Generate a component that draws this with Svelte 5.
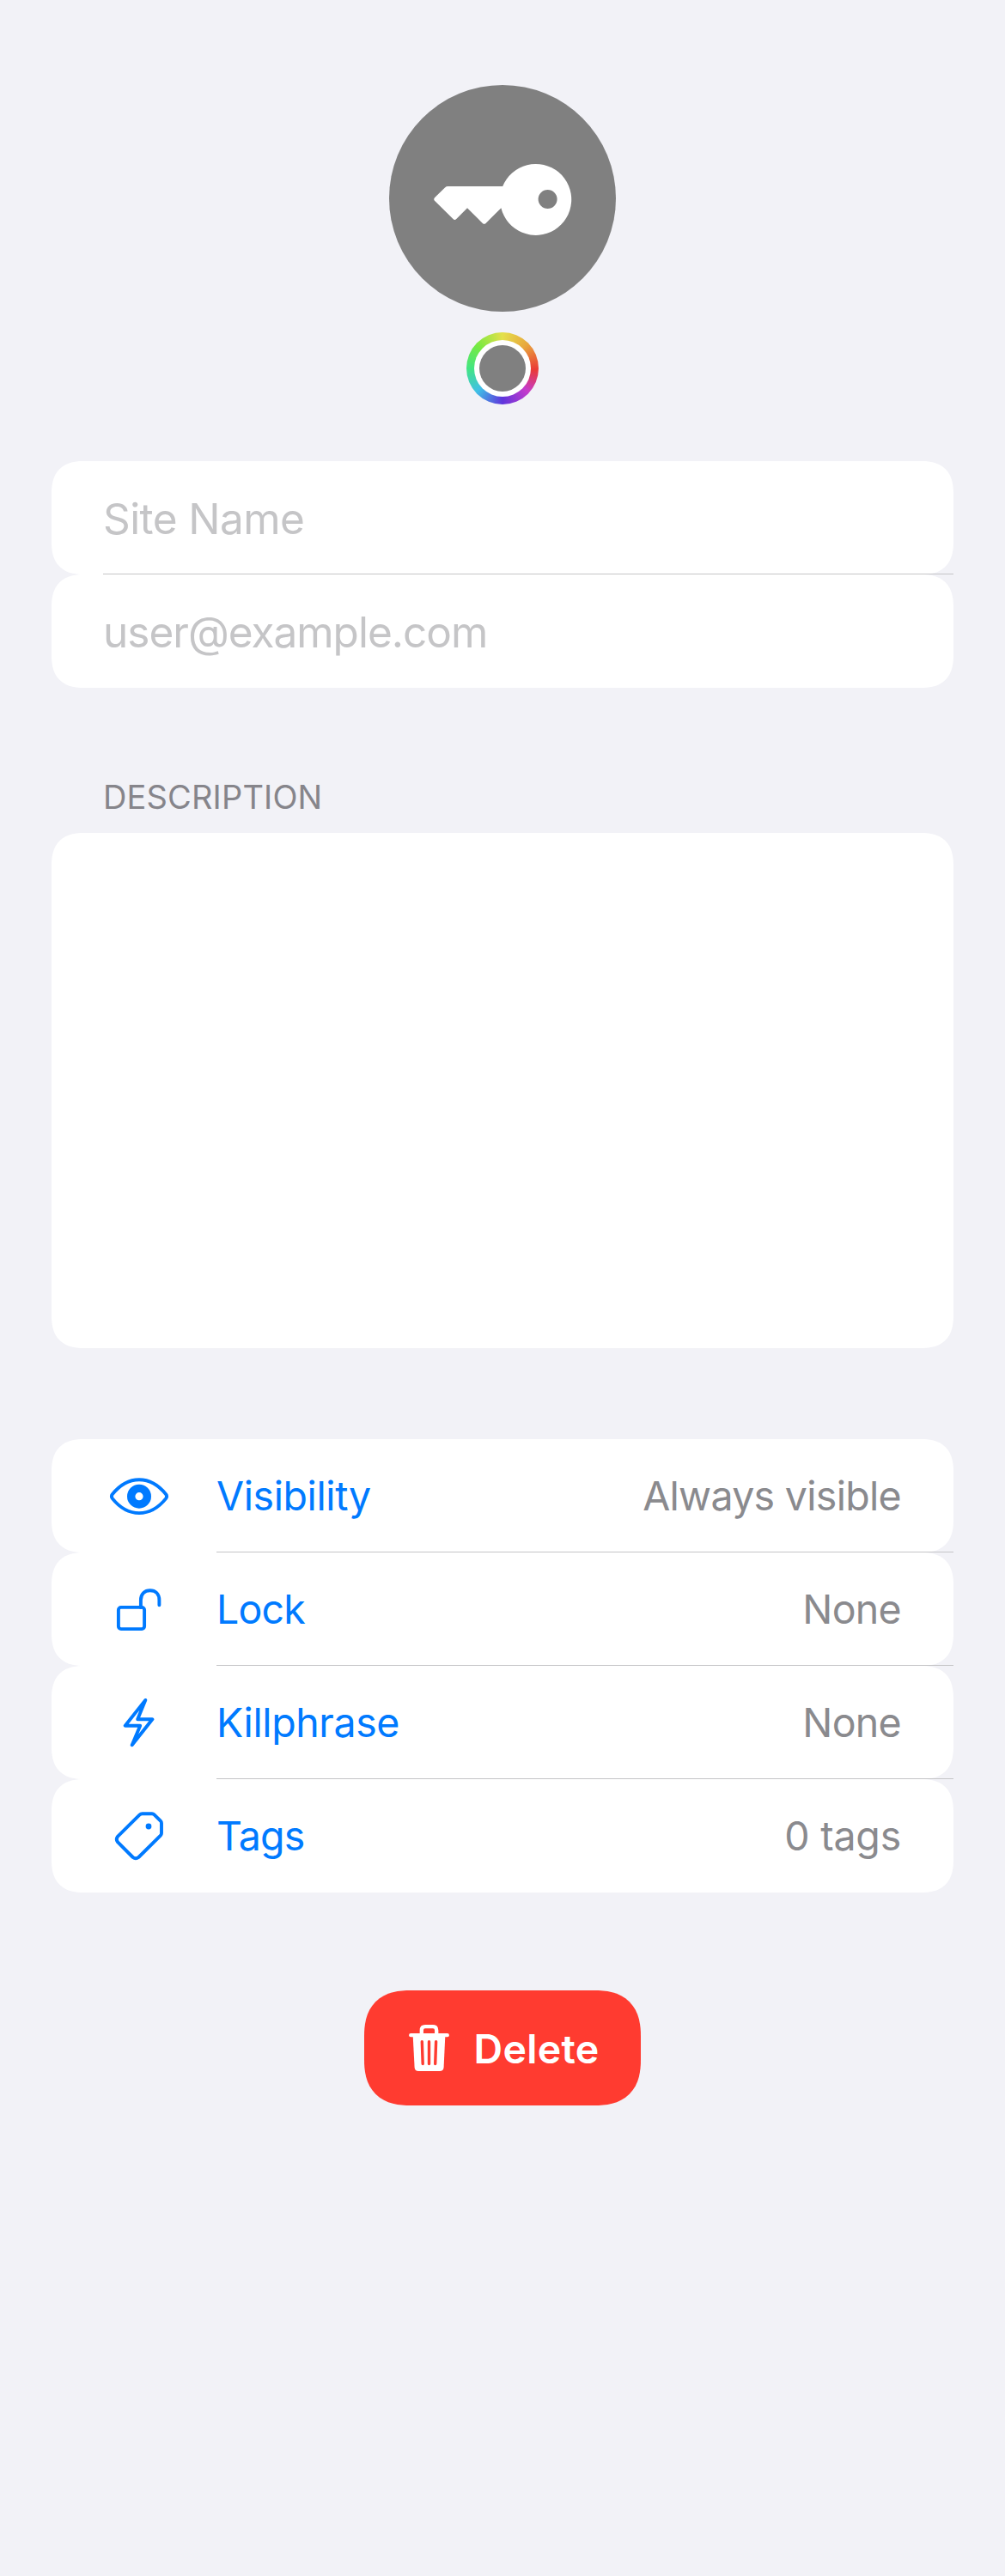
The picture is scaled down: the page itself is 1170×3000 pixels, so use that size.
<script>
  const fields = [
    { text: 'Site Name', kind: 'name' },
    { text: 'user@example.com', kind: 'user' },
  ];
  const settings = [
    { icon: 'eye', label: 'Visibility', value: 'Always visible' },
    { icon: 'lock', label: 'Lock', value: 'None' },
    { icon: 'bolt', label: 'Killphrase', value: 'None' },
    { icon: 'tag', label: 'Tags', value: '0 tags' },
  ];
</script>

<main>
  <header>
    <svg class="avatar" viewBox="0 0 264 264" aria-hidden="true">
      <circle cx="132" cy="132" r="132" fill="#808080" />
      <path
        fill="#fff"
        fill-rule="evenodd"
        d="M132.2 118H68.5Q66.500 118 65 119.400L53 131.200Q51.400 133 53 134.800L74.500 156.100Q76.400 157.800 78.300 156.100L91 143.200L108.800 160.900Q110.700 162.600 112.600 160.900L130.400 143.200A41.500 41.500 0 1 0 132.200 118ZM184.600 122a11 11 0 1 1 0 22a11 11 0 1 1 0-22Z"
      />
    </svg>
    <div class="well"><div class="well-gap"><div class="well-color"></div></div></div>
  </header>

  <section class="group">
    {#each fields as f}
      <div class="cell field"><span class="placeholder {f.kind}">{f.text}</span></div>
    {/each}
  </section>

  <h2>DESCRIPTION</h2>
  <section class="cell notes"></section>

  <section class="group settings">
    {#each settings as s}
      <div class="cell setting">
        <svg class="icon" viewBox="0 0 72 72" aria-hidden="true">
          {#if s.icon === 'eye'}
            <path d="M4.800 34.200C11 26.500 22 17.200 36 17.200S61 26.500 67.200 34.200Q69 36.700 67.200 39.100C61 46.800 50 56.100 36 56.100S11 46.800 4.800 39.100Q3 36.700 4.800 34.200Z" />
            <circle cx="36" cy="36.700" r="9.300" class="pupil" />
          {:else if s.icon === 'lock'}
            <rect x="11.900" y="33.900" width="30.200" height="25.200" rx="3" />
            <path d="M37.900 34V25.500C37.900 18 42.500 14.200 48.700 14.200S59.400 18 59.400 25.500V31.200" />
          {:else if s.icon === 'bolt'}
            <path d="M43.300 9.900L19.700 39.700H37.200L27.700 62.200L51.400 32.300H34.200Z" />
          {:else}
            <path d="M39.700 10.300H51Q52.500 10.300 53.600 11.400L60.900 18.700Q62 19.800 62 21.300V33Q62 34.500 60.900 35.600L35.300 61Q32 63.500 28.700 61L10.900 43.200Q8.600 40 10.900 36.800L36.400 11.700Q37.800 10.300 39.700 10.300Z" />
            <circle cx="47" cy="25" r="3.400" class="dot" />
          {/if}
        </svg>
        <span class="label {s.icon}">{s.label}</span>
        <span class="value {s.icon}">{s.value}</span>
      </div>
    {/each}
  </section>

  <button type="button">
    <svg class="trash" viewBox="0 0 48 56" aria-hidden="true">
      <path d="M14.800 13V7.500Q14.800 3.200 19 3.200H28Q32.200 3.200 32.200 7.500V13M2.200 13.200H44.800" fill="none" stroke="#fff" stroke-width="4.300" stroke-linecap="round" />
      <path d="M4.700 14H42.300L40.600 50.500Q40.300 55 35.800 55H11.200Q6.900 55 6.600 50.500Z" fill="#fff" />
      <path d="M15.300 20.700L16.200 46.500M23.500 20.700V46.500M31.600 20.700L30.700 46.500" fill="none" stroke="#ff3b30" stroke-width="3.400" stroke-linecap="round" />
    </svg>
    <span class="delete">Delete</span>
  </button>
</main>

<style>
  :global(body) {
    background: #f2f2f7;
  }
  main {
    box-sizing: border-box;
    width: 1170px;
    min-height: 3000px;
    padding: 99px 60px 0;
    display: flex;
    flex-direction: column;
    align-items: stretch;
    font-family: Inter, 'Liberation Sans', sans-serif;
    font-size: 46.5px;
  }
  header {
    display: flex;
    flex-direction: column;
    align-items: center;
    gap: 24px;
    margin-bottom: 66px;
  }
  .avatar {
    display: block;
    width: 264px;
    height: 264px;
  }
  .well,
  .well-gap,
  .well-color {
    display: grid;
    place-items: center;
    border-radius: 50%;
  }
  .well {
    width: 84px;
    height: 84px;
    background: conic-gradient(
      from 0deg,
      #e4e04a,
      #e8a83e 45deg,
      #ea3a35 92deg,
      #c63bcb 132deg,
      #5f35dc 180deg,
      #3fc0e6 228deg,
      #43e582 270deg,
      #76ea42 312deg,
      #e4e04a
    );
  }
  .well-gap {
    width: 66px;
    height: 66px;
    background: #fff;
  }
  .well-color {
    width: 54px;
    height: 54px;
    background: #808080;
  }
  .cell {
    box-sizing: border-box;
    background: #fff;
    border-radius: 32px;
  }
  @supports (corner-shape: superellipse(1.3)) {
    .cell {
      border-radius: 38px;
      corner-shape: superellipse(1.3);
    }
    button {
      border-radius: 54px !important;
      corner-shape: superellipse(1.3);
    }
  }
  .field,
  .setting {
    position: relative;
    height: 132px;
    padding: 0 60px;
    display: flex;
    align-items: center;
    white-space: nowrap;
  }
  .field:not(:last-child)::after,
  .setting:not(:last-child)::after {
    content: '';
    position: absolute;
    left: 60px;
    right: 0;
    bottom: 0;
    height: 1px;
    background: #c5c5c7;
  }
  .setting:not(:last-child)::after {
    left: 192px;
  }
  .placeholder {
    padding-top: 1px;
    color: #c5c5c7;
    font-size: 49.5px;
    letter-spacing: -0.6px;
  }
  .placeholder.user {
    letter-spacing: -1px;
  }
  h2 {
    margin: 103px 0 17px;
    padding-left: 60px;
    font-size: 38px;
    line-height: 49px;
    font-weight: 400;
    letter-spacing: 0.15px;
    color: #86858b;
  }
  .notes {
    height: 600px;
    margin-bottom: 106px;
  }
  .icon {
    width: 72px;
    height: 72px;
    margin: 0 54px 0 6px;
    fill: none;
    stroke: #007aff;
    stroke-width: 3.9;
    stroke-linecap: round;
    stroke-linejoin: round;
  }
  .pupil {
    stroke-width: 9.4;
  }
  .dot {
    fill: #007aff;
    stroke: none;
  }
  .label {
    color: #007aff;
    letter-spacing: -0.8px;
  }
  .label.eye,
  .label.bolt {
    letter-spacing: -0.4px;
  }
  .value {
    margin-left: auto;
    padding-right: 1px;
    color: #8a8a8e;
    letter-spacing: -0.7px;
  }
  .value.tag {
    letter-spacing: -0.2px;
  }
  button {
    align-self: center;
    box-sizing: border-box;
    width: 322px;
    height: 134px;
    margin-top: 114px;
    padding: 0 0 0 52px;
    display: flex;
    align-items: center;
    gap: 27.5px;
    border: 0;
    border-radius: 44px;
    background: #ff3b30;
    color: #fff;
    font: inherit;
    font-weight: 600;
    letter-spacing: 0.3px;
  }
  .delete {
    padding-top: 2px;
  }
  .trash {
    width: 48px;
    height: 56px;
  }
</style>
